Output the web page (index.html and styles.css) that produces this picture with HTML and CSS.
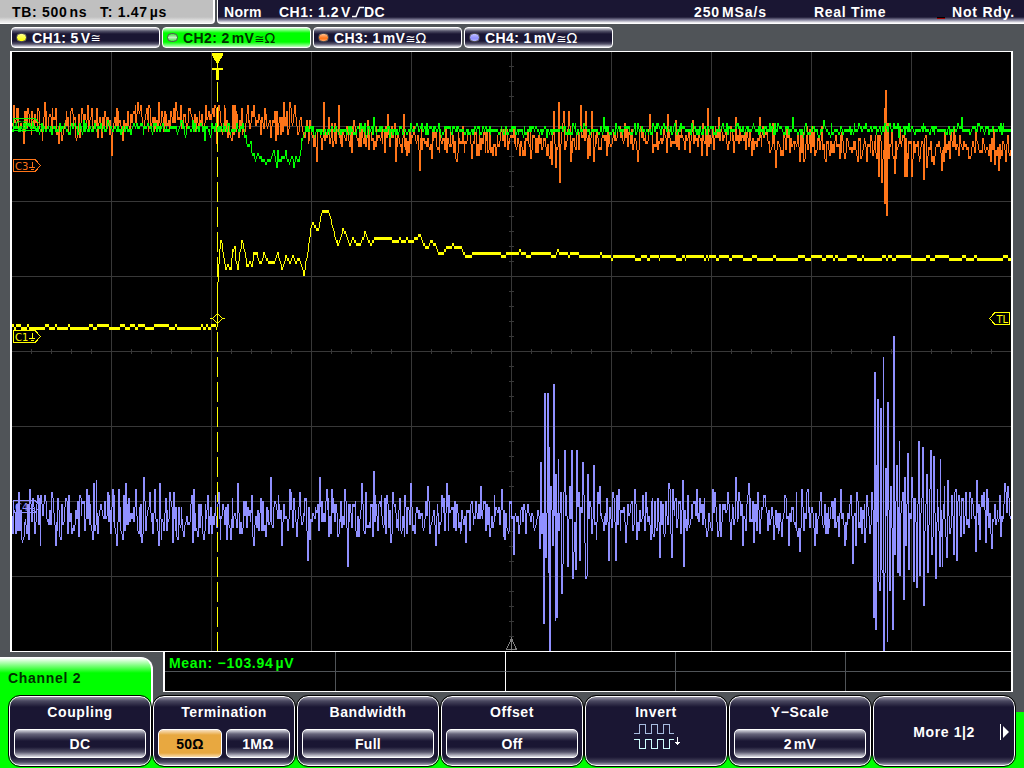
FILE: index.html
```html
<!DOCTYPE html>
<html lang="en">
<head>
  <meta charset="UTF-8">
  <title>Oscilloscope</title>
  <link rel="stylesheet" href="styles.css">
</head>
<body>
  <div class="scope">
    <header class="status">
      <div class="timebase">
        <span class="tb">TB: 500<i class="unit">ns</i></span>
        <span>T: 1.47<i class="unit">µs</i></span>
      </div>
      <div class="trigger">
        <span class="mode">Norm</span>
        <span class="source">CH1: 1.2<i class="unit">V</i><svg class="edge" width="13" height="12" viewBox="0 0 13 12"><path d="M1 10.5H5L8.5 1.5H13"/></svg>DC</span>
        <span class="rate">250<i class="unit">MSa/s</i></span>
        <span class="acq">Real Time</span>
        <span class="led"></span>
        <span class="ready">Not Rdy.</span>
      </div>
    </header>

    <div class="channels">
      <div class="chip ch1"><b class="dot"></b>CH1: 5<i class="unit">V</i><span class="sym">≅</span></div>
      <div class="chip ch2 active"><b class="dot"></b>CH2: 2<i class="unit">mV</i><span class="sym">≅<em>Ω</em></span></div>
      <div class="chip ch3"><b class="dot"></b>CH3: 1<i class="unit">mV</i><span class="sym">≅<em>Ω</em></span></div>
      <div class="chip ch4"><b class="dot"></b>CH4: 1<i class="unit">mV</i><span class="sym">≅<em>Ω</em></span></div>
    </div>

    <div class="display">
      <svg class="plot" width="999" height="599" viewBox="12 52 999 599" shape-rendering="crispEdges">
        <path id="grid"/>
        <g class="c3 marker">
          <path d="M13.5 159.5H35L40.5 165.5L35 171.5H13.5Z"/>
          <text x="15" y="169.5">C3</text>
          <path d="M32 161.500V167M29 167.500H35M30.500 169.500H33.500"/>
        </g>
        <path id="ch4" class="c4 trace"/>
        <path id="ch3" class="c3 trace"/>
        <path id="ch2" class="c2 trace"/>
        <path id="ch1" class="c1 trace"/>
        <g class="c2 marker">
          <path d="M13.5 118.500H35L40.500 124.500L35 130.500H13.500Z"/>
          <text x="15" y="128.500">C2</text>
          <path d="M32 120.500V126M29 126.500H35M30.500 128.500H33.500"/>
        </g>
        <g class="c1 marker">
          <path d="M13.5 330.5H35L40.5 336.5L35 342.5H13.5Z"/>
          <text x="15" y="340.5">C1</text>
          <path d="M32 332.500V338M29 338.500H35M30.500 340.500H33.500"/>
        </g>
        <g class="c4 marker">
          <path d="M13.5 500.5H35L40.5 506.5L35 512.5H13.5Z"/>
          <text x="15" y="510.5">C4</text>
          <path d="M32 502.500V508M29 508.500H35M30.500 510.500H33.500"/>
        </g>
        <g class="c1 marker">
          <path d="M1009.5 312.5H995L989.5 318.5L995 324.500H1009.500Z"/>
          <text x="996.500" y="322.500" class="tl">TL</text>
          <path d="M217.500 313.500L222.500 318.500L217.500 323.500L212.500 318.500ZM210 318.500H213M222 318.500H225"/>
          <path class="cursor" d="M217.500 82V651"/>
          <path class="solid" d="M212 53H223V55L218 64H217L212 55Z"/>
          <path class="solid" d="M212 68H223V70H219V80H216V70H212ZM217 64H218V68H217Z"/>
        </g>
        <path class="center" d="M511.500 639V650M511.500 638.500L506.500 649.500H516.500Z"/>
      </svg>
    </div>

    <div class="measure">
      <div class="mean">Mean: −103.94<i class="unit">µV</i></div><div></div><div></div><div></div><div></div>
      <div></div><div></div><div></div><div></div><div></div>
    </div>

    <div class="menu">
      <div class="tab">Channel 2</div>
      <div class="keys">
        <div class="key"><span>Coupling</span><div class="values"><b>DC</b></div></div>
        <div class="key"><span>Termination</span><div class="values"><b class="on">50Ω</b><b>1MΩ</b></div></div>
        <div class="key"><span>Bandwidth</span><div class="values"><b>Full</b></div></div>
        <div class="key"><span>Offset</span><div class="values"><b>Off</b></div></div>
        <div class="key"><span>Invert</span>
          <svg class="invert" width="48" height="28" viewBox="0 0 48 28" shape-rendering="crispEdges">
            <path class="dim" d="M0 9.500H5.500V.5H11.500V9.500H17.500V.5H23.500V9.500H29.500V.5H35.500V9.500H40"/>
            <path d="M0 15.500H5.500V24.500H11.500V15.500H17.500V24.500H23.500V15.500H29.500V24.500H35.500V15.500H40"/>
            <path class="arrow" d="M43.500 13V21M41 18.500H46M42 19.500H45"/>
          </svg>
        </div>
        <div class="key"><span>Y−Scale</span><div class="values"><b>2<i class="unit">mV</i></b></div></div>
        <div class="key more"><span>More 1|2</span>
          <svg width="10" height="18" viewBox="0 0 10 18"><path d="M.5 1V17"/><path class="tri" d="M3 3L9 9L3 15Z"/></svg>
        </div>
      </div>
    </div>
  </div>
  <script src="script.js"></script>
</body>
</html>
```
FILE: styles.css
```css
* {
  box-sizing: border-box;
}
body {
  margin: 0;
  width: 1024px;
  height: 768px;
  overflow: hidden;
  background: #505458;
  color: #fff;
  font: bold 14px "Liberation Sans", Arial, sans-serif;
  letter-spacing: 0.7px;
  white-space: nowrap;
}
i, em {
  font-style: normal;
}
.unit {
  margin-left: 2px;
}
.scope {
  display: flex;
  flex-direction: column;
  height: 768px;
}

/* status bar */
.status {
  display: flex;
  gap: 2px;
  height: 24px;
  line-height: 24px;
}
.timebase {
  display: flex;
  width: 215px;
  padding-left: 12px;
  background: linear-gradient(#c0c0c0 17px, #eee 22px);
  border: solid #fff;
  border-width: 0 2px 1px 0;
  border-radius: 0 0 4px 0;
  color: #000;
}
.tb {
  width: 88px;
}
.trigger {
  display: flex;
  flex: 1;
  padding-left: 6px;
  background: linear-gradient(#1a1633 17px, #8886a0 20px, #fff 23px);
  border-left: 1px solid #fff;
  border-bottom: 1px solid #fff;
  border-radius: 0 0 0 4px;
}
.mode {
  width: 55px;
  letter-spacing: 0.3px;
}
.source {
  width: 415px;
  letter-spacing: 0.5px;
}
.edge {
  vertical-align: -1px;
  fill: none;
  stroke: #fff;
  stroke-width: 1.6;
}
.rate {
  width: 120px;
  letter-spacing: 0.9px;
}
.acq {
  width: 123px;
}
.led {
  width: 8px;
  height: 2px;
  margin: 17px 7px 0 0;
  background: #a00000;
  border-top: 1px solid #000;
}
.ready {
  letter-spacing: 0.8px;
}

/* channel chips */
.channels {
  display: flex;
  gap: 2px;
  height: 27px;
  padding: 3px 0 0 11px;
}
.chip {
  display: flex;
  align-items: center;
  width: 149px;
  height: 21px;
  padding-left: 4px;
  border: 1px solid #fff;
  border-radius: 4px;
  background: linear-gradient(#d8d8e0, #55536a 3px, #1a1633 6px, #1a1633 13px, #55536a 16px, #e8e8f0);
  letter-spacing: 0.4px;
}
.chip.active {
  background: linear-gradient(#d0ffd0, #00ff00 5px, #00ff00 14px, #c0ffc0);
  color: #003000;
}
.dot {
  width: 11px;
  height: 9px;
  margin-right: 5px;
  border: 1px solid #555;
  border-radius: 5px;
}
.ch1 .dot {
  background: linear-gradient(#ffff90, #ffff00);
}
.ch2 .dot {
  background: linear-gradient(#40e040, #c0f0c0 50%, #40e040);
}
.ch3 .dot {
  background: linear-gradient(#ffc090, #ff7519 60%, #ffa060);
}
.ch4 .dot {
  background: linear-gradient(#c0c0ff, #9090ff 60%, #b0b0ff);
}
.sym {
  font: 12px "DejaVu Sans", sans-serif;
  letter-spacing: 0;
}
.sym em {
  font-size: 14px;
}

/* waveform display */
.display {
  width: 1003px;
  height: 601px;
  margin-left: 10px;
  border: solid #fff;
  border-width: 1px 2px;
  background: #000;
}
.plot {
  display: block;
}
#grid {
  fill: none;
  stroke: #383838;
}
.c1 {
  --c: #ffff00;
}
.c2 {
  --c: #00ff00;
}
.c3 {
  --c: #ff7519;
}
.c4 {
  --c: #9090ff;
}
.trace {
  fill: var(--c);
}
.marker path {
  fill: none;
  stroke: var(--c);
}
.marker text {
  fill: var(--c);
  font: 10px "DejaVu Sans", sans-serif;
  letter-spacing: 0;
}
.marker .solid {
  fill: var(--c);
  stroke: none;
}
.marker .cursor {
  stroke-dasharray: 20 5;
}
.center {
  fill: none;
  stroke: #808080;
}

/* measurement table */
.measure {
  display: grid;
  grid-template-columns: 171px 170px 170px 170px 1fr;
  grid-template-rows: 20px 1fr;
  width: 850px;
  height: 40px;
  margin-left: 163px;
  border: solid #fff;
  border-width: 0 2px 1px;
  background: #000;
}
.measure div {
  border-right: 1px solid #505458;
}
.measure div:nth-child(-n+5) {
  border-bottom: 1px solid #505458;
}
.measure div:nth-child(5n+2) {
  border-right-color: #fff;
}
.measure div:nth-child(5n) {
  border-right: 0;
}
.measure .mean {
  padding-left: 4px;
  color: #00ff00;
  line-height: 22px;
  letter-spacing: 0.7px;
}

/* softkey menu */
.menu {
  height: 111px;
  margin-top: -35px;
  background: linear-gradient(#00ff00, #00ff00) 0 55px no-repeat;
}
.tab {
  width: 153px;
  height: 56px;
  padding: 12px 0 0 8px;
  background: linear-gradient(#fff, #00ff00 15px);
  border: solid #fff;
  border-width: 1px 2px 0 0;
  border-radius: 0 12px 0 0;
  color: #003000;
  line-height: 16px;
}
.keys {
  display: grid;
  grid-template-columns: repeat(7, 142px);
  gap: 2px;
  height: 70px;
  margin-top: -17px;
  padding-left: 9px;
}
.key {
  display: flex;
  flex-direction: column;
  align-items: center;
  height: 70px;
  padding: 6px 4px 0;
  border: 1px solid #fff;
  border-radius: 11px;
  outline: 1px solid #000;
  outline-offset: 0;
  background: linear-gradient(#9896a8, #4a4860 4px, #1a1633 10px, #1a1633 60px, #4a4860 65px, #a8a6b8);
  line-height: 18px;
  letter-spacing: 0.6px;
}
.values {
  display: flex;
  gap: 4px;
  width: 100%;
  margin-top: 8px;
}
.values b {
  flex: 1;
  height: 29px;
  border: 1px solid #fff;
  border-radius: 5px;
  background: linear-gradient(#d8d8e0, #66647a 4px, #1a1633 11px, #1a1633 17px, #55536a 22px, #e0e0e8);
  line-height: 29px;
  text-align: center;
  letter-spacing: 0.3px;
}
.values .on {
  background: linear-gradient(#f8e0c0, #e8a840 5px, #e8a840 23px, #f8dcb0);
  color: #000;
}
.invert {
  margin: 3px 0 0 4px;
  fill: none;
  stroke: #d0ffff;
}
.invert .dim {
  stroke: #a8bce0;
}
.invert .arrow {
  stroke: #fff;
}
.more {
  flex-direction: row;
  justify-content: flex-end;
  padding: 2px 4px 0 0;
}
.more span {
  margin-right: 25px;
}
.more svg {
  stroke: #fff;
}
.more .tri {
  fill: #fff;
  stroke: none;
}
```
FILE: script.js
```js
const LEFT = 12, RIGHT = 1011, STEP = 3;

// repeatable noise
let seed = 7;
function rnd() {
  seed = (seed * 16807) % 2147483647;
  return seed / 2147483647;
}
const noise = () => rnd() + rnd() - 1;

function lerp(points, x) {
  for (let i = 1; i < points.length; i++) {
    const [x0, y0] = points[i - 1], [x1, y1] = points[i];
    if (x <= x1) return y0 + (y1 - y0) * (x - x0) / (x1 - x0 || 1);
  }
  return points[points.length - 1][1];
}

// noisy samples between the fixed peaks
function samples(base, amp, peaks, dx) {
  const out = [];
  const all = [[LEFT, lerp(base, LEFT)], ...peaks, [RIGHT, lerp(base, RIGHT)]];
  for (let i = 0; i < all.length; i++) {
    out.push(all[i]);
    const next = all[i + 1];
    if (!next) break;
    for (let x = all[i][0] + dx; x < next[0] - 0.7; x += dx) {
      out.push([x, lerp(base, x) + noise() * amp]);
    }
  }
  return out;
}

// one vertical bar per pixel column, snapped to the ADC step
function bars(points) {
  let d = '', i = 0, last = points[0][1];
  const snap = y => Math.round((y - 52) / STEP) * STEP + 51;
  for (let x = LEFT; x < RIGHT; x++) {
    let lo = last, hi = last, hit = false;
    while (i < points.length && points[i][0] < x + 1.6) {
      const y = points[i][1];
      lo = Math.min(lo, y);
      hi = Math.max(hi, y);
      last = y;
      hit = true;
      i++;
    }
    if (!hit && points[i]) {
      const [nx, ny] = points[i];
      const y = last + (ny - last) / Math.max(1, nx - x + 0.4);
      lo = Math.min(last, y);
      hi = Math.max(last, y);
      last = y;
    }
    const top = snap(lo), h = Math.max(STEP, snap(hi) - top);
    d += `M${x} ${top}h1v${h}h-1z`;
  }
  return d;
}

// graticule, 10 x 8 divisions
let grid = '';
for (let x = 111; x < 1011; x += 100) grid += `M${x + .5} 52V651`;
for (let y = 126; y < 651; y += 75) grid += `M12 ${y + .5}H1011`;
for (let x = 31; x < 1011; x += 20) grid += `M${x + .5} 349V354`;
for (let y = 66; y < 640; y += 15) grid += `M509 ${y + .5}H514`;
document.getElementById('grid').setAttribute('d', grid);

const ch1 = [];
for (let x = 12; x < 217; x += 2.6) ch1.push([x, rnd() < .45 ? 326 : 329]);
ch1.push([218, 329], [218.5, 282], [219, 265], [220, 250], [221, 242], [222, 243], [223.600, 260],
  [226, 270], [228, 266], [230.600, 270], [232, 260], [233, 250], [235, 247], [236, 263], [238, 270],
  [240, 253], [242.300, 241], [244.600, 253], [247, 267], [249.600, 262], [252, 267], [254, 254],
  [256.600, 254], [260, 266], [264, 254], [268, 263], [274, 263], [278, 254], [281.600, 270],
  [286, 257], [290, 263], [293, 257], [296, 263], [298, 260], [300, 261], [302, 268], [304, 276],
  [306, 262], [308, 252], [310.600, 230], [313, 223], [316, 230], [318.600, 228], [320.600, 218],
  [322.600, 212], [328, 212], [330, 218], [332, 225], [334.600, 237], [338, 246], [340.600, 237],
  [343, 229], [346, 235], [348.600, 243], [351, 243], [353, 239], [355, 242], [358, 246],
  [362, 242], [365, 233], [368, 240], [371, 246], [374, 240], [377, 237], [379, 239], [387, 237],
  [390, 239], [396, 242], [400, 239], [403, 242], [407, 239], [412, 242], [416, 237], [420, 236],
  [423, 243], [427, 249], [431, 242], [434, 243], [437, 251], [442, 254], [447, 248], [453, 245],
  [456, 248], [461, 248], [464, 254], [469, 257], [473, 254], [479, 252], [481, 254], [500, 254],
  [503, 257], [507, 254], [512, 252], [515, 254], [520, 251], [525, 254], [530, 257]);
const settle = [[530, 254], [555, 253], [590, 256], [650, 257], [1011, 258.500]];
for (let x = 532; x < 1011; x += 2.4) ch1.push([x, lerp(settle, x) + noise() * 2.6]);

const ch2Base = [[12, 129], [243, 129], [248, 146], [255, 156], [267, 160], [278, 158], [284, 156],
  [293, 162], [300, 160], [302, 140], [306, 131], [1011, 130]];
const ch2Peaks = [[205, 141], [251, 142], [277, 170], [294, 170], [374, 119], [426, 135], [604, 119],
  [793, 119], [824, 121], [899, 138], [962, 118]];

const ch3Base = [[12, 123], [110, 125], [130, 121], [300, 123], [312, 134], [380, 138], [430, 143],
  [600, 142], [700, 137], [780, 142], [865, 148], [1011, 150]];
const ch3Peaks = [[17, 109], [24, 145], [45, 103], [59, 145], [72, 109], [80, 139], [88, 106], [97, 109],
  [112, 157], [117, 109], [123, 142], [141, 106], [159, 103], [176, 103], [181, 107], [216, 109],
  [217, 144], [232, 142], [235, 106], [248, 106], [265, 109], [276, 142], [284, 103], [290, 103],
  [317, 163], [324, 103], [333, 147], [339, 106], [352, 153], [388, 115], [396, 163], [404, 115],
  [420, 172], [432, 159], [457, 163], [472, 160], [496, 157], [523, 157], [552, 166], [554, 112],
  [556, 169], [559, 103], [560, 184], [564, 112], [565, 150], [569, 112], [571, 163], [581, 106],
  [586, 112], [588, 160], [592, 112], [594, 163], [607, 157], [638, 163], [650, 115], [668, 115],
  [702, 157], [708, 109], [719, 118], [736, 118], [752, 157], [760, 118], [776, 169], [800, 163],
  [840, 160], [857, 157], [879, 178], [882, 183], [885, 109], [885.500, 205], [886.200, 91],
  [886.800, 216], [888, 125], [889, 160], [895, 175], [900, 130], [905, 178], [906, 140], [907, 178],
  [912, 178], [924, 181], [925, 140], [927, 168], [934, 166], [942, 172], [954, 127], [991, 163],
  [994, 131], [999, 172]];

const ch4Peaks = [[19, 493], [20, 532], [24, 538], [38, 496], [40.700, 547], [45, 496], [52, 493],
  [56, 547], [61, 541], [66, 499], [72, 535], [80, 496], [89, 496], [93, 541], [94, 484], [96.700, 481],
  [108, 493], [113, 490], [117, 547], [119, 490], [123, 541], [126, 484], [136, 490], [139, 535],
  [144, 478], [155, 490], [159, 547], [160, 484], [174, 493], [193, 544], [194, 490], [198, 538],
  [208, 496], [219, 493], [231, 541], [238, 484], [254, 547], [271, 478], [282, 547], [290, 490],
  [308, 562], [320, 478], [332, 490], [348, 568], [362, 484], [374, 472], [391, 544], [411, 484],
  [428, 487], [436, 547], [447, 484], [466, 544], [481, 487], [502, 490], [514, 556], [540, 550],
  [541, 463], [542, 534], [543, 513], [544.300, 625], [545, 394], [546, 559], [547.700, 394], [549, 574],
  [549.400, 448], [550, 651], [551, 487], [552.700, 547], [554, 385], [556, 622], [556.400, 475],
  [557, 618], [558.700, 460], [560.700, 493], [562, 595], [563.300, 565], [565, 451], [566.700, 497],
  [568.300, 568], [570, 487], [570.700, 520], [572, 451], [573, 580], [574, 553], [576, 570], [577, 451],
  [578.300, 508], [579, 493], [580.300, 562], [583, 463], [584.700, 543], [586, 580], [587.300, 577],
  [588.300, 475], [589.300, 520], [590, 502], [592, 535], [594, 466], [596.700, 541], [600, 487],
  [604, 532], [607.300, 499], [609, 562], [613.300, 493], [616.300, 562], [619, 490], [626, 543],
  [635, 490], [637, 541], [646, 493], [651, 541], [660, 559], [669, 484], [672, 559], [673, 490],
  [683, 481], [684, 568], [697, 490], [707, 538], [713, 490], [728, 493], [731, 541], [736, 478],
  [743, 547], [749, 484], [754, 543], [789, 547], [800, 553], [802, 490], [808, 490], [815, 547],
  [821, 493], [841, 490], [845, 547], [853, 565], [856, 547], [857, 493], [872, 493], [874, 619],
  [875, 373], [876, 631], [877, 466], [877.500, 523], [878, 400], [878.700, 583], [880, 592],
  [880.600, 409], [881.700, 571], [883, 574], [884, 358], [884.500, 651], [886, 469], [887, 517],
  [887.700, 643], [888.400, 403], [890, 592], [891, 487], [893, 631], [894, 337], [895, 556],
  [896.700, 466], [898, 574], [900, 442], [900.500, 577], [902.700, 493], [904, 601], [905, 478],
  [906, 547], [908, 454], [909, 571], [910, 513], [912, 478], [914, 583], [915, 499], [917, 589],
  [919, 442], [920.400, 577], [921.300, 513], [923, 448], [924.400, 607], [926.700, 475], [928, 574],
  [929.700, 490], [931, 451], [932, 556], [934, 457], [936, 580], [937.700, 490], [940, 568],
  [940.700, 460], [942.700, 568], [944.700, 487], [947, 559], [948.400, 481], [950, 535], [952, 496],
  [954, 556], [956, 490], [957, 562], [958, 502], [960, 517], [962, 499], [964.400, 535], [966, 493],
  [968.700, 529], [970, 493], [976, 553], [977, 481], [984, 493], [986, 544], [987, 490], [992.500, 550],
  [1005, 484], [1008, 487]];

function draw(id, points) {
  document.getElementById(id).setAttribute('d', bars(points));
}
draw('ch1', ch1);
draw('ch2', samples(ch2Base, 7.5, ch2Peaks, 0.85));
draw('ch3', samples(ch3Base, 19, ch3Peaks, 0.85));
draw('ch4', samples([[12, 517], [1011, 517]], 29, ch4Peaks, 0.85));
```
